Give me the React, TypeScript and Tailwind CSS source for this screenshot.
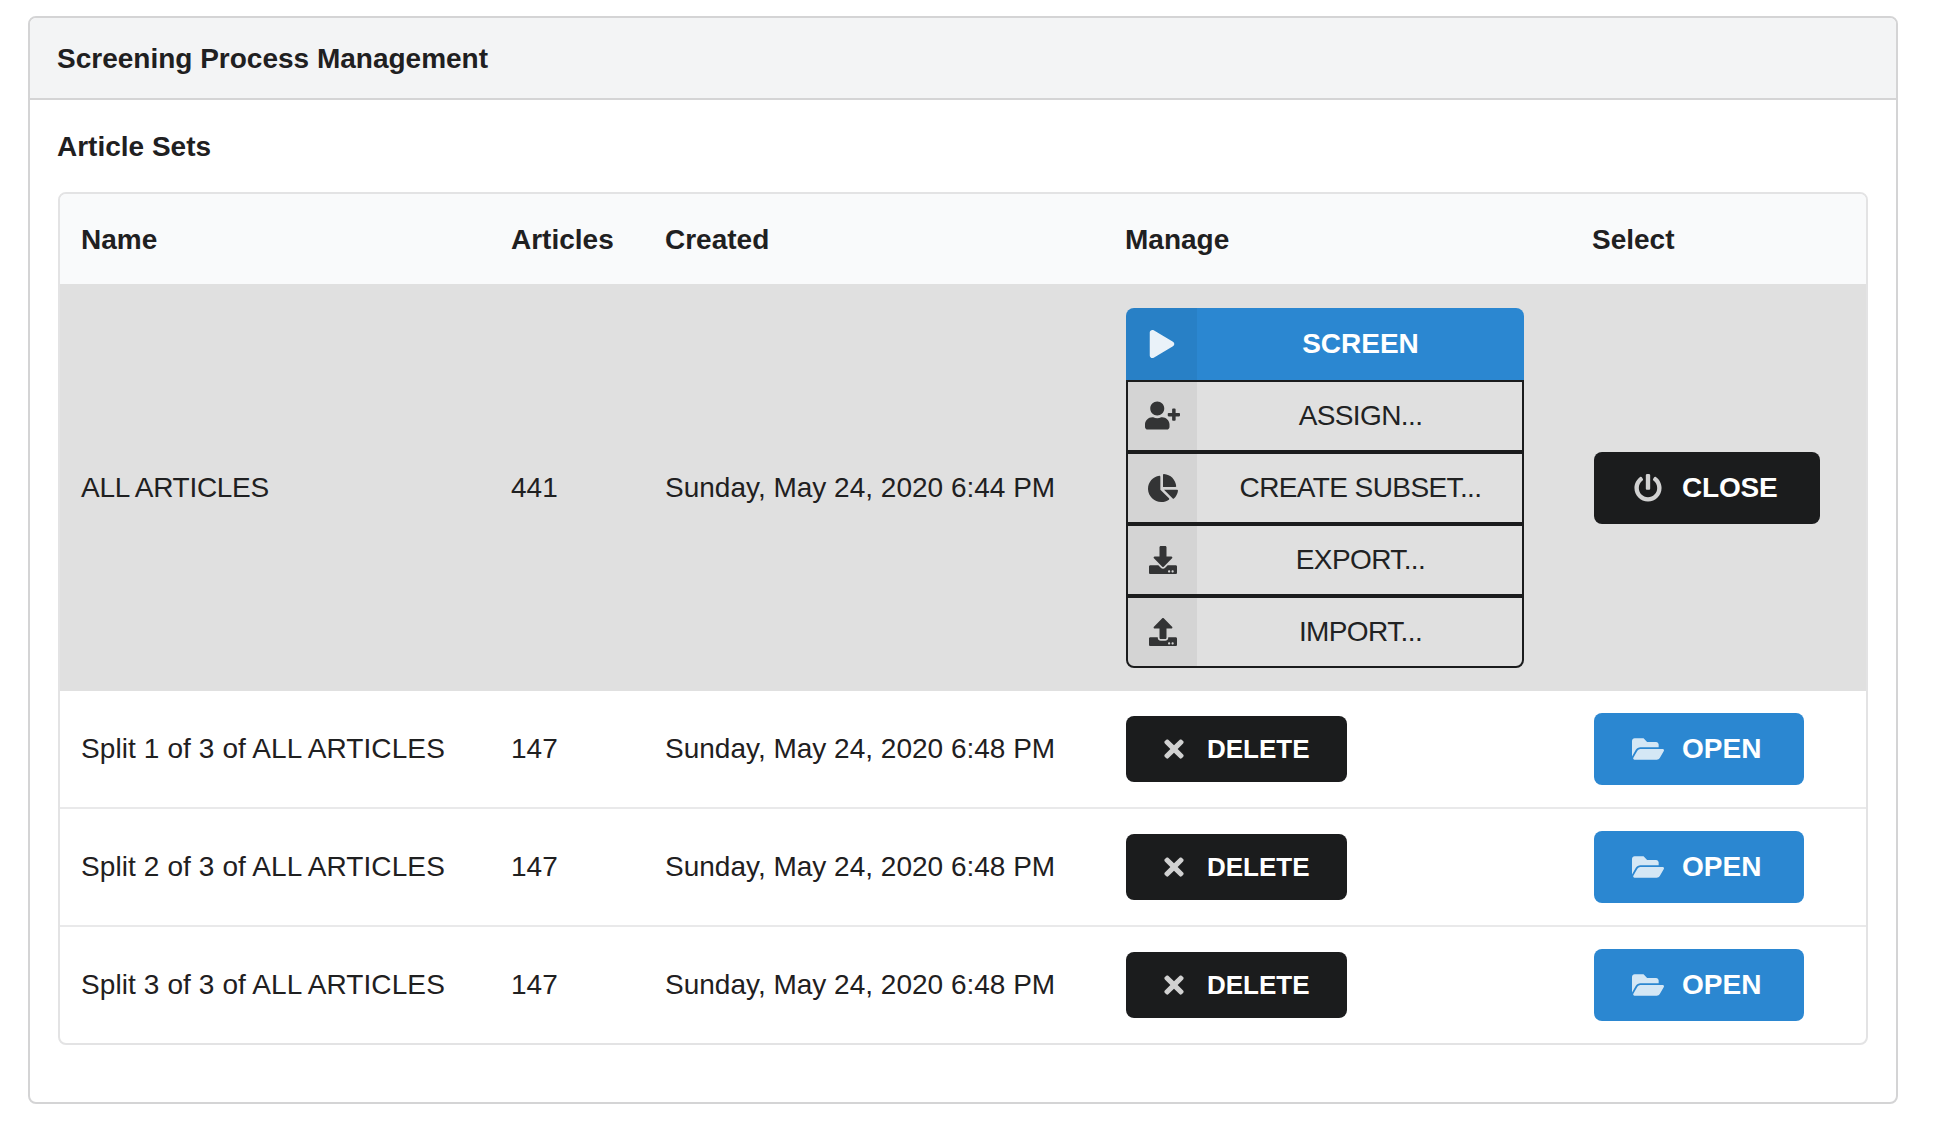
import type { ReactNode } from 'react';
import { FaChartPie, FaDownload, FaFolderOpen, FaPlay, FaPowerOff, FaTimes, FaUpload, FaUserPlus } from 'react-icons/fa';

function ActionRow({ icon, label, first, last }: { icon: ReactNode; label: string; first?: boolean; last?: boolean }) {
  const shape = first ? 'rounded-t-lg' : last ? 'rounded-b-lg' : '';
  const look = first
    ? 'bg-[#2b87d1] text-white font-bold'
    : 'bg-[#e0e0e0] text-[#212223] tracking-[-0.6px] shadow-[inset_0_0_0_2px_#1b1c1d]';
  return (
    <button className={`flex h-[72px] w-[398px] items-stretch overflow-hidden ${shape} ${look}`}>
      <span className={`flex items-center justify-center ${first ? 'w-[71px] bg-black/5 text-white/90' : 'm-[2px] mr-0 w-[69px] bg-black/5 text-[#333435]'} ${last ? 'rounded-bl-md' : ''}`}>
        {icon}
      </span>
      <span className="flex flex-1 items-center justify-center pt-px">{label}</span>
    </button>
  );
}

function SolidButton({ icon, label, color }: { icon: ReactNode; label: string; color: string }) {
  return (
    <button className={`ml-[2px] inline-flex h-[72px] items-center rounded-lg pl-[36px] font-bold text-white ${color}`}>
      <span className="mr-[17px] flex w-[35px] justify-center opacity-80">{icon}</span>
      {label}
    </button>
  );
}

function DeleteButton() {
  return (
    <button className="ml-px inline-flex h-[66px] items-center rounded-lg bg-[#1b1c1d] pl-[32px] pr-[37px] text-[26px] font-bold text-white">
      <span className="mr-[18px] flex w-[31px] justify-center opacity-80">
        <FaTimes size={28} />
      </span>
      DELETE
    </button>
  );
}

const splits = [
  { name: 'Split 1 of 3 of ALL ARTICLES', height: 'h-[117px]' },
  { name: 'Split 2 of 3 of ALL ARTICLES', height: 'h-[118px]' },
  { name: 'Split 3 of 3 of ALL ARTICLES', height: 'h-[117px]' },
];

export default function App() {
  return (
    <div className="min-h-[1136px] bg-white pl-[28px] pt-[16px] font-['Liberation_Sans',Arial,sans-serif] text-[28px] leading-[32px] text-[#1f2021]">
      <div className="h-[1088px] w-[1870px] rounded-lg border-2 border-[#d4d4d5]">
        <div className="flex h-[82px] items-center rounded-t-md border-b-2 border-[#d4d4d5] bg-[#f3f4f5] px-[27px] pt-px font-bold">
          Screening Process Management
        </div>
        <div className="px-[28px]">
          <h2 className="-ml-px flex h-[92px] items-center pt-px font-bold">Article Sets</h2>
          <div className="w-[1810px] overflow-hidden rounded-lg border-2 border-[#e3e3e4]">
            <table className="w-full table-fixed border-collapse text-left">
              <colgroup>
                <col className="w-[426px]" />
                <col className="w-[154px]" />
                <col className="w-[460px]" />
                <col className="w-[467px]" />
                <col />
              </colgroup>
              <thead>
                <tr className="h-[90px] bg-[#f9fafb] font-bold">
                  <th className="pl-[21px] pt-[2px]">Name</th>
                  <th className="pl-[25px] pt-[2px]">Articles</th>
                  <th className="pl-[25px] pt-[2px]">Created</th>
                  <th className="pl-[25px] pt-[2px]">Manage</th>
                  <th className="pl-[25px] pt-[2px]">Select</th>
                </tr>
              </thead>
              <tbody>
                <tr className="h-[407px] bg-[#e0e0e0]">
                  <td className="pl-[21px] tracking-[-0.3px]">ALL ARTICLES</td>
                  <td className="pl-[25px]">441</td>
                  <td className="pl-[25px]">Sunday, May 24, 2020 6:44 PM</td>
                  <td className="pl-[26px]">
                    <div className="flex flex-col">
                      <ActionRow first icon={<FaPlay size={28} />} label="SCREEN" />
                      <ActionRow icon={<FaUserPlus size={35} />} label="ASSIGN..." />
                      <ActionRow icon={<FaChartPie size={30} />} label="CREATE SUBSET..." />
                      <ActionRow icon={<FaDownload size={28} />} label="EXPORT..." />
                      <ActionRow last icon={<FaUpload size={28} />} label="IMPORT..." />
                    </div>
                  </td>
                  <td className="pl-[25px]">
                    <SolidButton icon={<FaPowerOff size={28} />} label="CLOSE" color="bg-[#1b1c1d] pr-[43px] tracking-[-0.2px]" />
                  </td>
                </tr>
                {splits.map((row, i) => (
                  <tr key={row.name} className={`${row.height} ${i > 0 ? 'border-t-2 border-[#e9e9ea]' : ''}`}>
                    <td className="pl-[21px] tracking-[0.1px]">{row.name}</td>
                    <td className="pl-[25px]">147</td>
                    <td className="pl-[25px]">Sunday, May 24, 2020 6:48 PM</td>
                    <td className="pl-[25px]">
                      <DeleteButton />
                    </td>
                    <td className="pl-[25px]">
                      <SolidButton icon={<FaFolderOpen size={32} />} label="OPEN" color="bg-[#2b87d1] pr-[43px]" />
                    </td>
                  </tr>
                ))}
              </tbody>
            </table>
          </div>
        </div>
      </div>
    </div>
  );
}
